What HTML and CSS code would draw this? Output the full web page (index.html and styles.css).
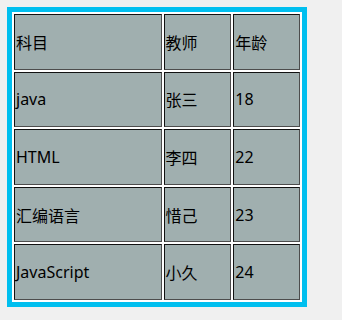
FILE: index.html
```html
<!DOCTYPE html>
<html>
<head>
<meta charset="utf-8">
<link rel="stylesheet" href="styles.css">
</head>
<body>
<table class="grid">
  <tr><td class="c1">科目</td><td class="c2">教师</td><td class="c3">年龄</td></tr>
  <tr><td>java</td><td>张三</td><td>18</td></tr>
  <tr><td>HTML</td><td>李四</td><td>22</td></tr>
  <tr><td>汇编语言</td><td>惜己</td><td>23</td></tr>
  <tr><td>JavaScript</td><td>小久</td><td>24</td></tr>
</table>
</body>
</html>
```
FILE: styles.css
```css
html, body {
  background: #f0f0f0;
}
body {
  margin: 7px;
  font-family: "Noto Sans", "Noto Sans CJK SC", sans-serif;
  font-size: 16px;
  color: #000;
}
.grid {
  width: 300px;
  height: 300px;
  border: 5px solid #00bfef;
  background: #fff;
  border-spacing: 2px;
}
.grid td {
  background: #a0afaf;
  border: 1px solid;
  border-color: #111 #4d4d4d #4d4d4d #111;
  padding: 1px;
  vertical-align: middle;
}
.c1 { width: 144px; }
.c2 { width: 64px; }
.c3 { width: 63px; }
```
